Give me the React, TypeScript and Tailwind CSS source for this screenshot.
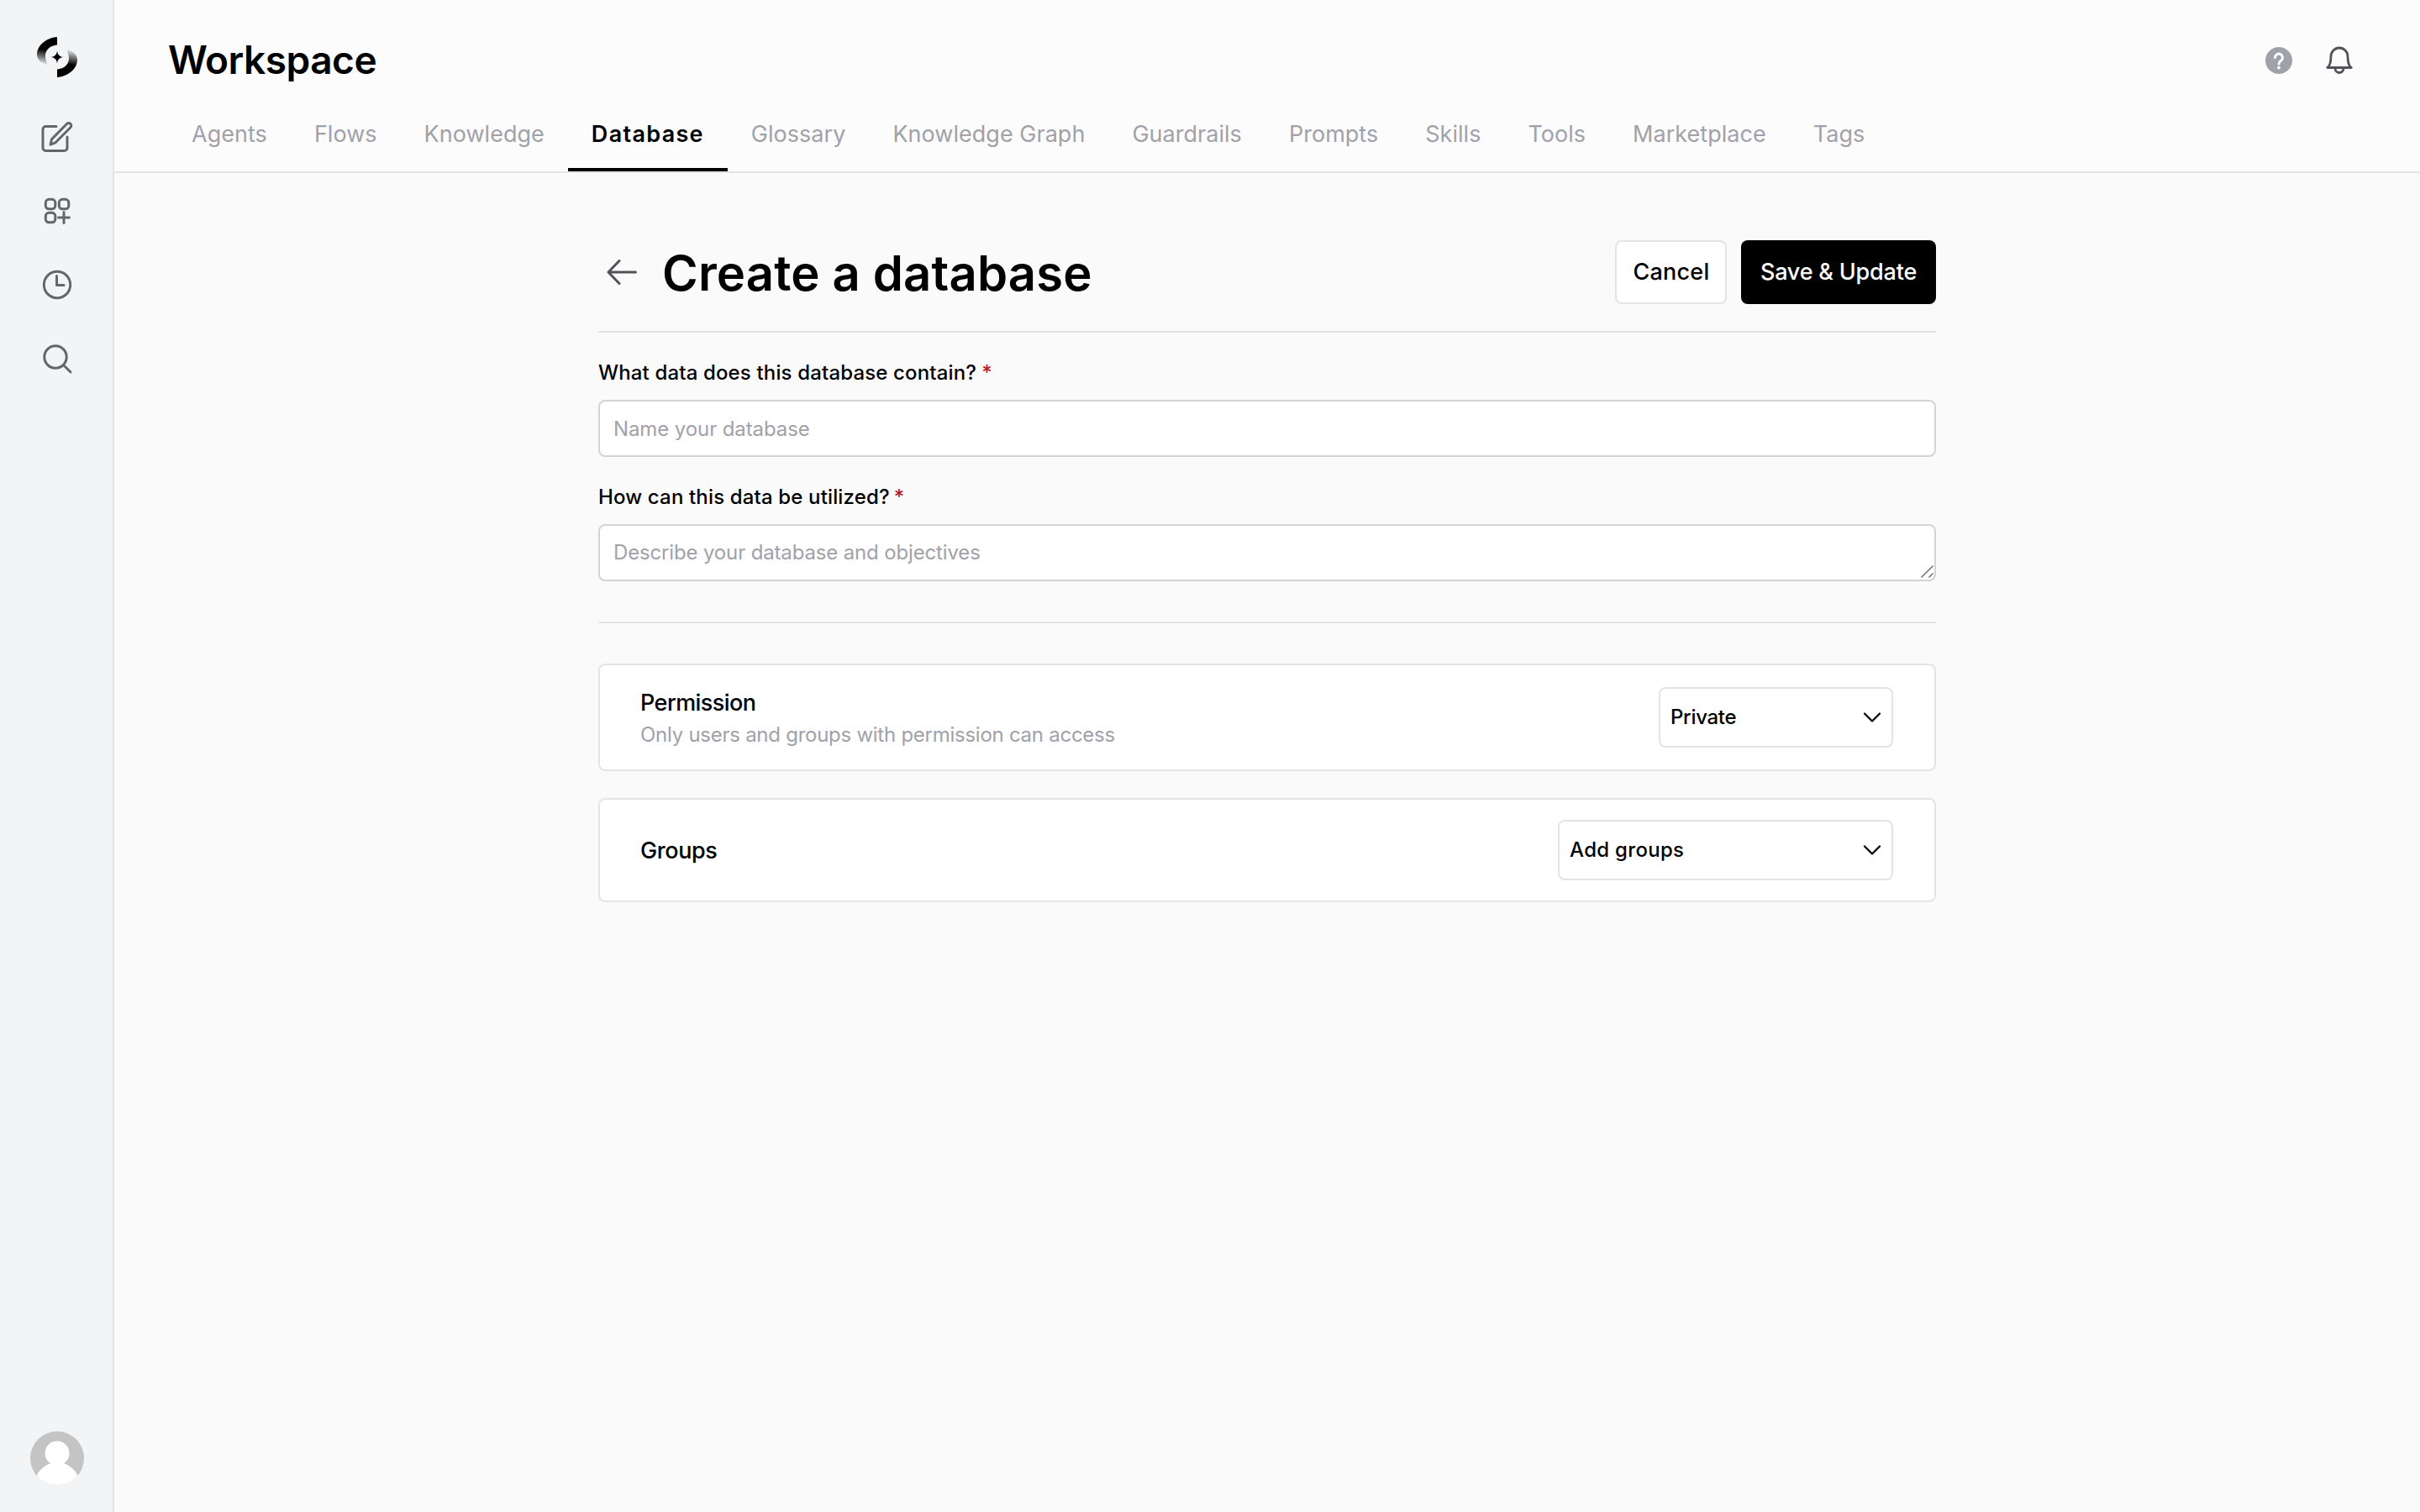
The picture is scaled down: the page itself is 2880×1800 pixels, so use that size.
import { ChevronDown } from "lucide-react";

const tabs = ["Agents", "Flows", "Knowledge", "Database", "Glossary", "Knowledge Graph", "Guardrails", "Prompts", "Skills", "Tools", "Marketplace", "Tags"];

function Logo() {
  return (
    <svg width="48" height="48" viewBox="0 0 48 48">
      <defs>
        <linearGradient id="logoA" x1="16" y1="6" x2="12" y2="34" gradientUnits="userSpaceOnUse">
          <stop offset="0.35" stopColor="#000" />
          <stop offset="1" stopColor="#000" stopOpacity="0" />
        </linearGradient>
        <linearGradient id="logoB" x1="32" y1="42" x2="36" y2="14" gradientUnits="userSpaceOnUse">
          <stop offset="0.35" stopColor="#000" />
          <stop offset="1" stopColor="#000" stopOpacity="0" />
        </linearGradient>
      </defs>
      <path d="M24 0V9.5C16 10 10.5 15 10 21.5C9.8 25.5 11 29.5 13 34C5 31 0 27 0 21C0 10 11 1 24 0Z" fill="url(#logoA)" />
      <path d="M24 48V38.5C32 38 37.5 33 38 26.5C38.2 22.5 37 18.5 35 14C43 17 48 21 48 27C48 38 37 47 24 48Z" fill="url(#logoB)" />
      <path d="M24 16.5C24.8 21.5 26.5 23.2 31.5 24C26.5 24.8 24.8 26.5 24 31.5C23.2 26.5 21.5 24.8 16.5 24C21.5 23.2 23.2 21.5 24 16.5Z" fill="#000" />
    </svg>
  );
}

function SideIcons() {
  return (
    <div className="mt-[51px] flex flex-col items-center gap-[48px] text-[#666666]">
      <svg width="40" height="40" viewBox="0 0 40 40" fill="none" stroke="currentColor" strokeWidth="3" strokeLinecap="round" strokeLinejoin="round">
        <path d="M19 7.5H6.5a3.5 3.5 0 0 0-3.5 3.5v22a3.5 3.5 0 0 0 3.5 3.5h22a3.5 3.5 0 0 0 3.5-3.5V20" />
        <path d="M12 29l1.6-6.4L31.5 4.5a2.9 2.9 0 0 1 4.4 4.2L18 26.8z" />
      </svg>
      <svg width="40" height="40" viewBox="0 0 40 40" fill="none" stroke="currentColor" strokeWidth="3" strokeLinecap="round">
        <rect x="6.3" y="6.3" width="11.5" height="11.5" rx="4" />
        <rect x="22.3" y="6.3" width="11.5" height="11.5" rx="4" />
        <rect x="6.3" y="22.3" width="11.5" height="11.5" rx="4" />
        <path d="M28 21.5V34.5M21.5 28H34.5" />
      </svg>
      <svg width="40" height="40" viewBox="0 0 40 40" fill="none" stroke="currentColor" strokeWidth="3" strokeLinecap="round" strokeLinejoin="round">
        <circle cx="20" cy="20" r="15.7" />
        <path d="M19.5 9.5V20.5H28" />
      </svg>
      <svg width="40" height="40" viewBox="0 0 40 40" fill="none" stroke="currentColor" strokeWidth="3" strokeLinecap="round">
        <circle cx="18" cy="18" r="13.2" />
        <path d="M28 28L36 36" />
      </svg>
    </div>
  );
}

function Avatar() {
  return (
    <svg width="64" height="64" viewBox="0 0 64 64" className="mb-[32px] mt-auto">
      <defs>
        <clipPath id="avatarClip">
          <circle cx="32" cy="32" r="32" />
        </clipPath>
      </defs>
      <g clipPath="url(#avatarClip)">
        <rect width="64" height="64" fill="#c4c4c4" />
        <circle cx="32" cy="26" r="14.5" fill="#fff" />
        <ellipse cx="32" cy="64" rx="27" ry="27" fill="#fff" />
      </g>
    </svg>
  );
}

function SelectBox({ label, className }: { label: string; className: string }) {
  return (
    <button className={`flex h-[72px] items-center justify-between rounded-[8px] border-2 border-[#e4e4e7] bg-white pl-[12px] pr-[5px] text-[24px] font-medium text-black ${className}`}>
      {label}
      <ChevronDown size={36} strokeWidth={1.5} />
    </button>
  );
}

export default function App() {
  return (
    <div className="flex h-screen bg-[#fafafa] font-[Inter,sans-serif] text-black">
      <aside className="flex w-[136px] flex-col items-center border-r-2 border-[#e4e4e7] bg-[#f3f4f6] pl-[2px] pt-[44px]">
        <Logo />
        <SideIcons />
        <Avatar />
      </aside>

      <main className="flex-1">
        <header className="relative h-[206px] border-b-2 border-[#e4e4e7] bg-[#fcfcfc] pl-[64px]">
          <div className="flex h-[116px] items-start pt-[42px] text-[46px] font-semibold leading-[58px] tracking-[-0.5px]">Workspace</div>
          <nav className="flex h-[88px]">
            {tabs.map((tab) => (
              <a
                key={tab}
                className={
                  tab === "Database"
                    ? "flex items-center border-b-4 border-black px-[28px] pt-[5px] text-[27px] font-semibold tracking-[1.3px] text-black"
                    : "flex items-center px-[28px] pt-[1px] text-[27px] tracking-[0.03px] text-[#a1a1aa]"
                }
              >
                {tab}
              </a>
            ))}
          </nav>
          <div className="absolute right-[80px] top-[55px] flex items-center gap-[40px]">
            <svg width="32" height="32" viewBox="0 0 32 32">
              <circle cx="16" cy="16" r="16" fill="#a1a1aa" />
              <path d="M11.5 12.5a4.5 4.5 0 1 1 7 3.8c-1.7 1.1-2.5 2-2.5 3.7" fill="none" stroke="#fff" strokeWidth="3" strokeLinecap="round" />
              <circle cx="16" cy="24.5" r="1.9" fill="#fff" />
            </svg>
            <svg width="32" height="34" viewBox="0 0 32 34" fill="none" stroke="#52525b" strokeWidth="2.8" strokeLinecap="round" strokeLinejoin="round">
              <path d="M1.8 25.5C5.5 23 6 18.5 6 12a10 10 0 0 1 20 0C26 18.5 26.5 23 30.2 25.5Z" />
              <path d="M11 26.5a5 5 0 0 0 10 0" />
            </svg>
          </div>
        </header>

        <section className="mx-auto w-[1592px] pt-[80px]">
          <div className="flex items-start border-b-2 border-[#e4e4e7] pb-[32px]">
            <div className="flex h-[76px] w-full items-center">
              <svg width="36" height="30" viewBox="0 0 36 30" fill="none" stroke="#52525b" strokeWidth="3" strokeLinecap="round" strokeLinejoin="round" className="ml-[10px]">
                <path d="M34.5 15H2M15 1.5L2 15L15 28.5" />
              </svg>
              <h1 className="ml-[30px] pt-[2px] text-[58px] font-semibold leading-[76px] tracking-[0.15px]">Create a database</h1>
              <button className="ml-auto h-[76px] w-[133px] rounded-[8px] border-2 border-[#e4e4e7] bg-white pl-[1px] pt-[1px] text-[27px] font-medium tracking-[0.2px]">Cancel</button>
              <button className="ml-[17px] h-[76px] w-[232px] rounded-[8px] bg-black pt-[1px] text-[27px] font-medium tracking-[-0.2px] text-white">Save &amp; Update</button>
            </div>
          </div>

          <div className="border-b-2 border-[#e4e4e7] pb-[48px]">
            <label className="mt-[30px] block text-[24px] font-medium leading-[36px] tracking-[0.15px]">
              What data does this database contain?<span className="ml-[6px] text-[#b91c1c]">*</span>
            </label>
            <input
              placeholder="Name your database"
              className="mt-[14px] block h-[68px] w-full rounded-[8px] border-2 border-[#d4d4d8] bg-white px-[16px] text-[24px] tracking-[-0.1px] outline-none placeholder:text-[#a1a1aa]"
            />
            <label className="mt-[30px] block text-[24px] font-medium leading-[36px] tracking-[0.15px]">
              How can this data be utilized?<span className="ml-[5px] text-[#b91c1c]">*</span>
            </label>
            <div className="relative mt-[14px]">
              <textarea
                rows={1}
                placeholder="Describe your database and objectives"
                className="block h-[68px] w-full resize-none rounded-[8px] border-2 border-[#d4d4d8] bg-white px-[16px] py-[16px] text-[24px] leading-[32px] tracking-[-0.15px] outline-none placeholder:text-[#a1a1aa]"
              />
              <svg width="15" height="15" viewBox="0 0 15 15" stroke="#5f5f5f" strokeWidth="1.3" className="pointer-events-none absolute bottom-[4px] right-[3px]">
                <path d="M0.5 14.5L14.5 0.5M9.5 14.5L14.5 9.5" />
              </svg>
            </div>
          </div>

          <div className="mt-[48px] flex h-[128px] items-center justify-between rounded-[8px] border-2 border-[#e4e4e7] bg-white pl-[48px] pr-[49px]">
            <div className="pt-[2px]">
              <div className="text-[27px] font-medium leading-[36px] tracking-[-0.55px]">Permission</div>
              <div className="mt-[4px] text-[24px] leading-[32px] tracking-[-0.26px] text-[#a1a1aa]">Only users and groups with permission can access</div>
            </div>
            <SelectBox label="Private" className="w-[279px] tracking-[-0.3px]" />
          </div>

          <div className="mt-[32px] flex h-[124px] items-center justify-between rounded-[8px] border-2 border-[#e4e4e7] bg-white pl-[48px] pr-[49px]">
            <div className="pt-[1px] text-[27px] font-medium leading-[36px] tracking-[-0.4px]">Groups</div>
            <SelectBox label="Add groups" className="w-[399px] tracking-[0.3px]" />
          </div>
        </section>
      </main>
    </div>
  );
}
